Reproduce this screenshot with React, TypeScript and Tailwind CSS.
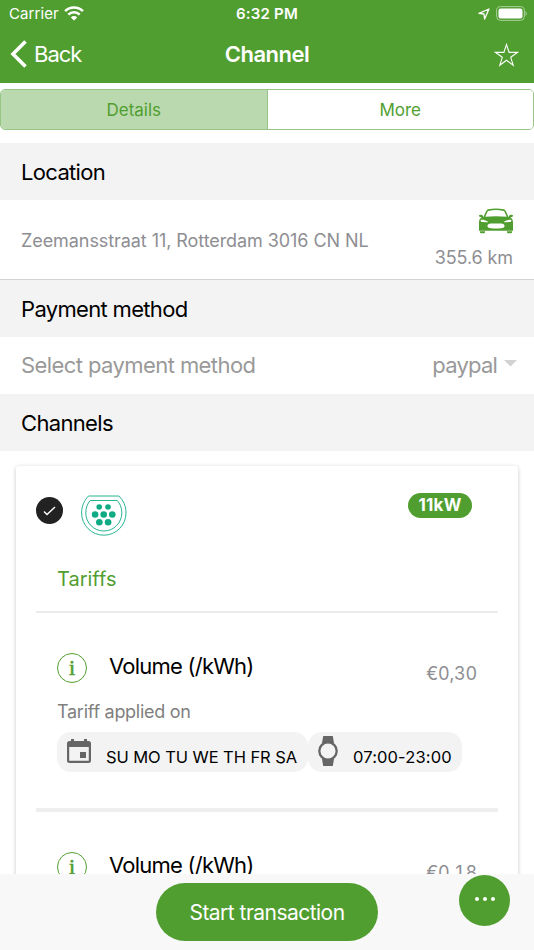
import React, { useState } from 'react';

type Tariff = { name: string; price: string; days?: string; hours?: string };

const tariffs: Tariff[] = [
  { name: 'Volume (/kWh)', price: '€0,30', days: 'SU MO TU WE TH FR SA', hours: '07:00-23:00' },
  { name: 'Volume (/kWh)', price: '€0,18' },
];

function StatusBar() {
  return (
    <div className="flex h-7 items-center justify-between pl-[9px] pr-[7px]">
      <div className="flex w-[198px] items-center gap-[5px]">
        <span className="text-[15px] tracking-[0.1px]">Carrier</span>
        <svg width="20" height="15" viewBox="0 0 20 15" fill="none" stroke="white" strokeWidth="2.5" className="-mt-0.5">
          <path d="M1.1 5.2a12.6 12.6 0 0 1 17.8 0" />
          <path d="M4.3 8.6a8.1 8.1 0 0 1 11.4 0" />
          <path d="M10 14.6 6.8 11.4a4.5 4.5 0 0 1 6.4 0Z" fill="white" stroke="none" />
        </svg>
      </div>
      <span className="text-[15px] font-semibold tracking-[0.2px]">6:32 PM</span>
      <div className="flex w-[200px] items-center justify-end gap-1.5">
        <svg width="12" height="12" viewBox="0 0 12 12" fill="none" stroke="white" strokeWidth="1.3" strokeLinejoin="round">
          <path d="M11 1 1 5.4l5 .6.6 5L11 1Z" />
        </svg>
        <svg width="31" height="15" viewBox="0 0 31 15" fill="none" className="-mt-0.5">
          <rect x="0.6" y="0.6" width="27.8" height="13.8" rx="4" stroke="white" strokeOpacity="0.5" />
          <rect x="2.5" y="2.5" width="24" height="10" rx="2.2" fill="white" />
          <path d="M29.5 5v5c1.6-.8 1.6-4.2 0-5Z" fill="white" fillOpacity="0.5" />
        </svg>
      </div>
    </div>
  );
}

function NavBar() {
  return (
    <div className="flex h-[53px] items-center justify-between pl-[10px] pr-[15px]">
      <button className="flex w-[155px] items-center gap-[7px]">
        <svg width="17" height="28" viewBox="0 0 17 28" fill="none" stroke="white" strokeWidth="3.6" className="-mt-0.5">
          <path d="M15.5 1.5 3 14l12.5 12.5" />
        </svg>
        <span className="text-[22px] tracking-[-1px]">Back</span>
      </button>
      <h1 className="text-[22px] font-semibold tracking-[-0.5px]">Channel</h1>
      <div className="flex w-[150px] justify-end">
        <svg width="25" height="24" viewBox="0 0 25 24" fill="none" stroke="white" strokeWidth="1.1">
          <path d="m12.5 1.5 2.6 7.9h8.3l-6.7 4.9 2.5 7.9-6.7-4.9-6.7 4.9 2.5-7.9-6.7-4.9h8.3Z" />
        </svg>
      </div>
    </div>
  );
}

function SectionTitle({ children }: { children: React.ReactNode }) {
  return (
    <h2 className="flex h-[57px] items-center bg-[#f3f3f3] px-[21px] text-[22px] tracking-[-0.67px] text-black">
      <span className="pt-px">{children}</span>
    </h2>
  );
}

function CarIcon() {
  return (
    <svg width="36" height="27" viewBox="0 0 36 27" className="-mr-px">
      <path d="M6.3 9.500C7.700 5.500 8.700 2.600 10.200 2.100c4-.9 11.600-.9 15.600 0 1.500.5 2.500 3.400 3.900 7.400" fill="none" stroke="#519e30" strokeWidth="1.600" />
      <path
        fill="#519e30"
        fillRule="evenodd"
        d="M1 7.300c1.300-.8 3.600-.7 3.900.8l.2.7L7 8.800c7-.9 15-.9 22 0l1.900 0 .2-.7c.3-1.500 2.600-1.600 3.900-.8.3 1.300-.5 1.800-2.500 2 1.800 1.500 2.500 3 2.500 5.200v8.300H1v-8.300c0-2.200.7-3.700 2.500-5.200-2-.2-2.800-.7-2.500-2ZM2.800 11.800c-.2 1.500.2 2.100 1.200 2.200l5 .3c1 0 1-.6.300-1-1.800-1.100-4.200-1.700-6.500-1.500Zm30.400 0c-2.300-.2-4.700.4-6.500 1.500-.7.4-.7 1 .3 1l5-.3c1-.1 1.400-.7 1.200-2.200ZM13 15.600c-4.600.4-4.900 4.300 0 4.700 3 .3 7 .3 10 0 4.900-.4 4.600-4.300 0-4.700-3-.3-7-.3-10 0Z"
      />
      <path d="M2 23.300h5v1a1 1 0 0 1-1 1H3a1 1 0 0 1-1-1Zm27 0h5v1a1 1 0 0 1-1 1h-3a1 1 0 0 1-1-1Z" fill="#519e30" />
    </svg>
  );
}

function PlugIcon() {
  return (
    <svg width="46" height="42" viewBox="0 0 46 42" fill="none" stroke="#10ab84" strokeWidth="0.9">
      <path d="M7.5 1h30.400C42.500 5.500 45 11 45 18a22.200 22.200 0 0 1-44.400 0C.6 11 3.200 5.500 7.500 1Z" />
      <path d="M9.200 5.500h27c3 3.200 4.600 7.300 4.600 12.500a18 18 0 0 1-36 0c0-5.200 1.600-9.300 4.400-12.500Z" />
      <g fill="#10ab84" stroke="none">
        <circle cx="18.200" cy="12" r="2.800" />
        <circle cx="27" cy="12" r="2.800" />
        <circle cx="14.100" cy="19.500" r="3.300" />
        <circle cx="22.700" cy="19.500" r="3.300" />
        <circle cx="31.300" cy="19.500" r="3.300" />
        <circle cx="18.300" cy="27.300" r="3.300" />
        <circle cx="27.100" cy="27.300" r="3.300" />
      </g>
    </svg>
  );
}

function TariffItem({ name, price, days, hours }: Tariff) {
  return (
    <div className="h-[199px] border-b-4 border-[#eeeeee] px-[21px] pt-[40px]">
      <div className="flex h-[30px]">
        <span className="flex size-[30px] items-center justify-center rounded-full border-[1.5px] border-[#519e30] font-['Liberation_Serif',serif] text-[22px] leading-none text-[#519e30] [-webkit-text-stroke:0.6px_#519e30]">i</span>
        <span className="ml-[22px] mt-[-3px] text-[22px] leading-[32px] tracking-[-0.77px] text-black">{name}</span>
        <span className="ml-auto mt-[8px] text-[18px] leading-[26px] tabular-nums tracking-[-0.2px] text-[#8e8e93]">{price}</span>
      </div>
      {days && (
        <>
          <p className="mt-[16px] text-[18px] leading-[26px] tracking-[-0.28px] text-[#808080]">Tariff applied on</p>
          <div className="mt-[7px] flex">
            <div className="flex h-10 w-[251px] items-center rounded-[14px] bg-[#f3f3f3] pl-[10px]">
              <svg width="24" height="24" viewBox="0 0 24 24" className="-mt-0.5">
                <path
                  fill="#666666"
                  fillRule="evenodd"
                  d="M4 0h3v2h10V0h3v2h1.5A2.5 2.5 0 0 1 24 4.5v17a2.5 2.5 0 0 1-2.5 2.5h-19A2.5 2.5 0 0 1 0 21.5v-17A2.5 2.5 0 0 1 2.5 2H4ZM2.2 8v13.8h19.6V8ZM13 13h6v6h-6Z"
                />
              </svg>
              <span className="ml-[15px] mt-[10px] whitespace-nowrap text-[16.5px] tracking-[-0.08px] text-black">{days}</span>
            </div>
            <div className="flex h-10 w-[154px] items-center rounded-[14px] bg-[#f3f3f3] pl-[9px]">
              <svg width="22" height="30" viewBox="0 0 22 30" className="-mt-0.5">
                <path d="M6.2 0h9.6L17 7H5Zm-1.200 23h12l-1.200 7H6.200Z" fill="#666666" />
                <circle cx="11" cy="15" r="8.700" fill="#f3f3f3" stroke="#666666" strokeWidth="2.300" />
              </svg>
              <span className="ml-[14px] mt-[10px] whitespace-nowrap text-[16.5px] tracking-[0.13px] text-black">{hours}</span>
            </div>
          </div>
        </>
      )}
    </div>
  );
}

export default function App() {
  const [tab, setTab] = useState('Details');

  return (
    <div className="flex h-[950px] w-[534px] flex-col overflow-hidden bg-white font-['Inter',sans-serif]">
      <header className="h-[83px] shrink-0 bg-[#519e30] text-white">
        <StatusBar />
        <NavBar />
      </header>

      <main className="min-h-0 flex-1 overflow-hidden">
        <div className="mb-[13px] mt-[6px] flex h-[41px] overflow-hidden rounded-[5px] border border-[#97c585]">
          {['Details', 'More'].map((label) => (
            <button
              key={label}
              onClick={() => setTab(label)}
              className={`flex-1 border-[#97c585] pt-[2px] text-[17px] text-[#519e30] first:border-r ${tab === label ? 'bg-[#bad9ae]' : 'bg-white'}`}
            >
              {label}
            </button>
          ))}
        </div>

        <SectionTitle>Location</SectionTitle>
        <div className="flex h-20 justify-between border-b border-[#d2d2d4] px-[21px] text-[18px] text-[#8e8e93]">
          <span className="mt-[28px] leading-[26px] tracking-[-0.07px]">Zeemansstraat 11, Rotterdam 3016 CN NL</span>
          <div className="flex flex-col items-end pt-[8px]">
            <CarIcon />
            <span className="mt-[10px] leading-[26px] tracking-[-0.1px]">355.6 km</span>
          </div>
        </div>

        <SectionTitle>Payment method</SectionTitle>
        <div className="flex h-[57px] items-center justify-between pl-[21px] pr-[17px] text-[22px] tracking-[-0.58px] text-[#999999]">
          <span>Select payment method</span>
          <span className="flex items-center gap-[7px] tracking-[-0.8px]">
            paypal
            <svg width="13" height="7" viewBox="0 0 13 7" className="-mt-1">
              <path d="M0 0h13L6.5 6.5Z" fill="#d2d2d2" />
            </svg>
          </span>
        </div>

        <SectionTitle>Channels</SectionTitle>
        <section className="mx-4 mt-[15px] rounded-[3px] px-5 shadow-[0_1px_4px_rgba(0,0,0,0.22)]">
          <div className="flex pt-[27px]">
            <span className="mt-1 flex size-[27px] items-center justify-center rounded-full bg-[#222222]">
              <svg width="13" height="10" viewBox="0 0 13 10" fill="none" stroke="white" strokeWidth="1.4">
                <path d="m1 5.5 3 3L12 1" />
              </svg>
            </span>
            <span className="ml-[18px] mt-[2px]"><PlugIcon /></span>
            <span className="ml-auto mr-[26px] flex h-[25px] w-16 items-center justify-center rounded-full bg-[#519e30] text-[17px] font-bold tracking-[0.2px] text-white">11kW</span>
          </div>
          <h3 className="mt-[24px] h-[52px] border-b-2 border-[#ebebeb] pl-[21px] text-[20px] leading-[36px] text-[#519e30]">Tariffs</h3>
          {tariffs.map((tariff) => (
            <TariffItem key={tariff.price} {...tariff} />
          ))}
        </section>
      </main>

      <footer className="relative flex h-[76px] shrink-0 justify-center bg-[#f8f8f8] pt-[9px]">
        <button className="h-[58px] w-[222px] rounded-full bg-[#519e30] pt-[2px] text-[21px] tracking-[-0.53px] text-white">Start transaction</button>
        <button className="absolute right-6 top-[1px] flex size-[51px] items-center justify-center gap-[4px] rounded-full bg-[#519e30] pb-[3px]">
          <i className="size-1 rounded-full bg-white" />
          <i className="size-1 rounded-full bg-white" />
          <i className="size-1 rounded-full bg-white" />
        </button>
      </footer>
    </div>
  );
}
